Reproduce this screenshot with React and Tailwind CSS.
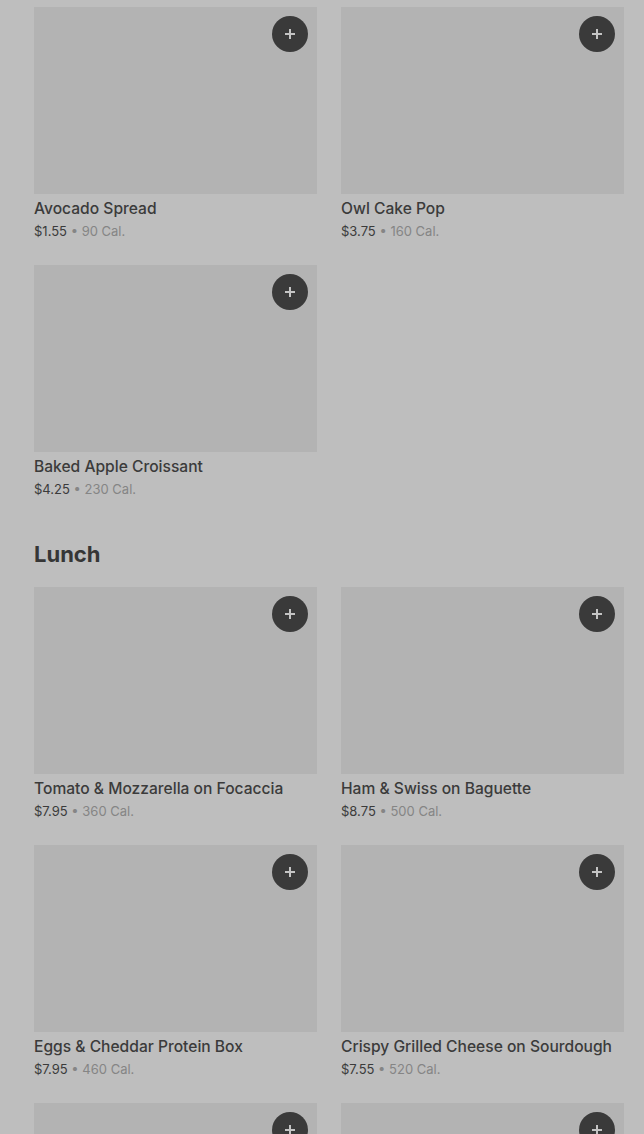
import React from "react";

const breakfast = [
  { name: "Avocado Spread", price: "$1.55", cal: "90 Cal." },
  { name: "Owl Cake Pop", price: "$3.75", cal: "160 Cal." },
  { name: "Baked Apple Croissant", price: "$4.25", cal: "230 Cal." },
];

const lunch = [
  { name: "Tomato & Mozzarella on Focaccia", price: "$7.95", cal: "360 Cal." },
  { name: "Ham & Swiss on Baguette", price: "$8.75", cal: "500 Cal." },
  { name: "Eggs & Cheddar Protein Box", price: "$7.95", cal: "460 Cal." },
  { name: "Crispy Grilled Cheese on Sourdough", price: "$7.55", cal: "520 Cal." },
  { name: null },
  { name: null },
];

function Card({ item }) {
  return (
    <div className="flex flex-col">
      <div className="relative h-[187px] bg-[#b3b3b3]">
        <button className="absolute right-[9px] top-[9px] flex h-[36px] w-[36px] items-center justify-center rounded-full bg-[#3a3a3a]">
          <svg width="12" height="12" viewBox="0 0 12 12">
            <path d="M6 1v10M1 6h10" stroke="#c4c4c4" strokeWidth="2" />
          </svg>
        </button>
      </div>
      {item.name && (
        <>
          <div className="mt-[3px] text-[15.6px] leading-[24px] font-medium text-[#3b3b3b] whitespace-nowrap">
            {item.name}
          </div>
          <div className="text-[13px] leading-[20px] text-[#3b3b3b]">
            <span>{item.price}</span>
            <span className="text-[#858585]"> • {item.cal}</span>
          </div>
        </>
      )}
    </div>
  );
}

export default function App() {
  return (
    <div
      className="h-[1134px] w-[644px] overflow-hidden bg-[#bebebe] pl-[34px] pr-[20px] pt-[7px]"
      style={{ fontFamily: "Inter, 'Noto Sans', sans-serif" }}
    >
      <div className="grid grid-cols-2 gap-x-[24px] gap-y-[24px]">
        {breakfast.map((it) => (
          <Card key={it.name} item={it} />
        ))}
      </div>
      <h2 className="mt-[41px] mb-[19px] text-[22px] leading-[28px] font-bold text-[#363636]">
        Lunch
      </h2>
      <div className="grid grid-cols-2 gap-x-[24px] gap-y-[24px]">
        {lunch.map((it, i) => (
          <Card key={i} item={it} />
        ))}
      </div>
    </div>
  );
}
